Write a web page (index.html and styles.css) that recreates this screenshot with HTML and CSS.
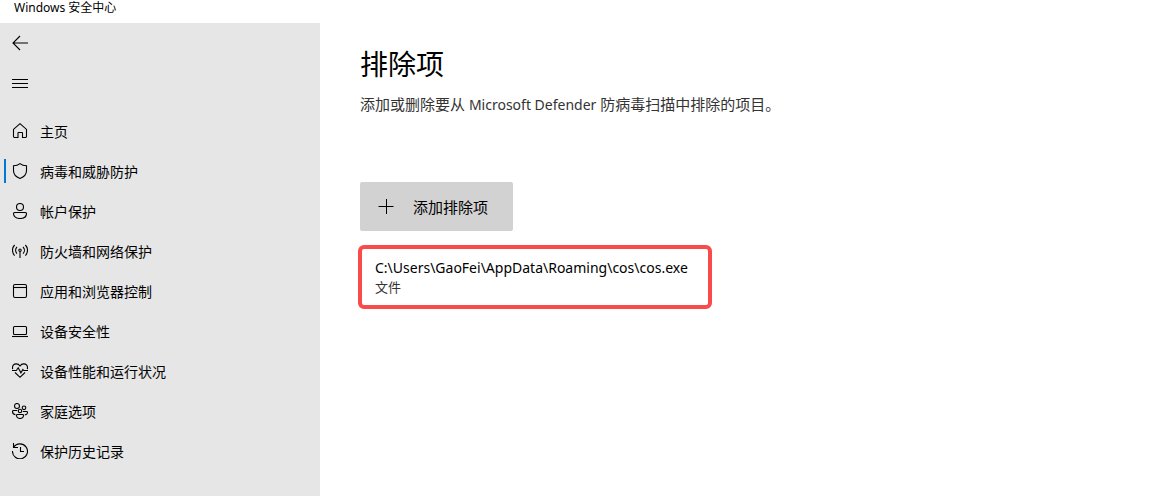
FILE: index.html
```html
<!DOCTYPE html>
<html lang="zh-CN">
<head>
<meta charset="utf-8">
<meta name="viewport" content="width=device-width, initial-scale=1">
<title>Windows 安全中心</title>
<link rel="stylesheet" href="styles.css">
</head>
<body>
<header class="titlebar">Windows 安全中心</header>
<div class="window">
  <aside class="sidebar">
    <button class="tool" type="button" aria-label="返回">
      <svg class="icon" viewBox="0 0 16 16"><path d="M8 1L1 8l7 7M1 8h15"/></svg>
    </button>
    <button class="tool" type="button" aria-label="菜单">
      <svg class="icon" viewBox="0 0 16 16"><path d="M0 4.500h16M0 8.500h16M0 12.500h16"/></svg>
    </button>
    <nav class="nav">
      <a class="item" href="#home">
        <svg class="icon" viewBox="0 0 16 16"><path d="M1.500 6.400L8 .7l6.500 5.700v7.200q0 .9-.9.900h-3.100V10q0-.5-.5-.5H6.500q-.5 0-.5.5v4.500H2.400q-.9 0-.9-.9z"/></svg>
        主页</a>
      <a class="item active" href="#virus" aria-current="page">
        <svg class="icon" viewBox="0 0 16 16"><path d="M8 .6C9.800 2 12 2.700 14.500 2.800v5c0 3.500-2.200 6-6.500 7.600-4.300-1.600-6.500-4.100-6.500-7.600v-5C4 2.700 6.200 2 8 .6z"/></svg>
        病毒和威胁防护</a>
      <a class="item" href="#account">
        <svg class="icon" viewBox="0 0 16 16"><circle cx="8" cy="4" r="3.500"/><path d="M2.500 9.500h11q1 0 1 1c0 3-2.500 5-6.500 5s-6.500-2-6.500-5q0-1 1-1z"/></svg>
        帐户保护</a>
      <a class="item" href="#firewall">
        <svg class="icon" viewBox="0 0 16 16"><path d="M2.600 2C-.2 5-.2 9.600 2.600 12.600M13.400 2c2.800 3 2.800 7.600 0 10.600M5 4c-1.900 1.900-1.900 4.700 0 6.600M11 4c1.900 1.900 1.900 4.700 0 6.600M8 8.500v6.500"/><circle cx="8" cy="7.200" r="1.200"/></svg>
        防火墙和网络保护</a>
      <a class="item" href="#apps">
        <svg class="icon" viewBox="0 0 16 16"><rect x="1.500" y="1.500" width="13" height="13" rx="1.500"/><path d="M1.500 4.500h13"/></svg>
        应用和浏览器控制</a>
      <a class="item" href="#device">
        <svg class="icon" viewBox="0 0 16 16"><rect x="1.500" y="3.500" width="13" height="8" rx="1"/><path d="M0 13.500h16"/></svg>
        设备安全性</a>
      <a class="item" href="#health">
        <svg class="icon" viewBox="0 0 16 16"><path d="M.7 6.200C-.2 2.500 2 .9 4.300.9 6 .9 7.200 1.700 8 3 8.800 1.700 10 .9 11.700.9c2.300 0 4.500 1.600 3.600 5.300M0 7.500h4.300l1.900-2.700 2.700 5 2-3.300.8 1H16M3 9.500l5 4.800 5-4.800"/></svg>
        设备性能和运行状况</a>
      <a class="item" href="#family">
        <svg class="icon" viewBox="0 0 16 16"><circle cx="5" cy="3" r="2.500"/><circle cx="12" cy="4.800" r="1.800"/><circle cx="8" cy="8" r="1.700"/><path d="M5.300 7.500H1.500q-1 0-1 1C.5 10.300 1.600 11.500 3.500 11.700M10.800 8.500h3.700q1 0 1 .9c0 1.500-1 2.400-2.700 2.500M5.500 11.500h5q1 0 1 .8c0 2-1.300 3.200-3.500 3.200s-3.500-1.200-3.500-3.200q0-.8 1-.8z"/></svg>
        家庭选项</a>
      <a class="item" href="#history">
        <svg class="icon" viewBox="0 0 16 16"><path d="M1.500 0v4.500H6M1.700 4.300A7.500 7.500 0 1 1 .5 8M8.500 4v4.500H12"/></svg>
        保护历史记录</a>
    </nav>
  </aside>
  <main class="content">
    <h1 class="heading">排除项</h1>
    <p class="description">添加或删除要从 <span class="product">Microsoft Defender</span> 防病毒扫描中排除的项目。</p>
    <button class="add" type="button">
      <svg class="icon plus" viewBox="0 0 16 16"><path d="M.5 7.500h15M8.500 0v15"/></svg>
      添加排除项
    </button>
    <section class="exclusion">
      <div class="path">C:\Users\GaoFei\AppData\Roaming\cos\cos.exe</div>
      <div class="kind">文件</div>
    </section>
  </main>
</div>
</body>
</html>
```
FILE: styles.css
```css
* {
  box-sizing: border-box;
}

body {
  display: flex;
  flex-direction: column;
  min-height: 100vh;
  margin: 0;
  background: #fff;
  color: #000;
  font-family: "Noto Sans", "Noto Sans CJK SC", sans-serif;
  font-size: 14px;
}

button {
  border: 0;
  color: inherit;
  font: inherit;
}

.titlebar {
  height: 23px;
  padding-left: 14px;
  font-size: 12px;
  line-height: 16px;
}

.window {
  display: flex;
  flex: 1;
}

.sidebar {
  flex: 0 0 320px;
  background: #e6e6e6;
}

.icon {
  flex: none;
  width: 16px;
  height: 16px;
  fill: none;
  stroke: currentColor;
  stroke-width: 1.1;
}

.plus {
  stroke-width: 1;
}

.tool {
  display: flex;
  align-items: center;
  height: 40px;
  padding: 0 12px;
  background: transparent;
}

.nav {
  padding-top: 8px;
}

.item {
  position: relative;
  display: flex;
  align-items: center;
  gap: 12px;
  height: 40px;
  padding-left: 12px;
  color: inherit;
  text-decoration: none;
}

.active::before {
  content: "";
  position: absolute;
  top: 8px;
  left: 4px;
  width: 2px;
  height: 24px;
  background: #0078d4;
}

.content {
  flex: 1;
  padding: 19px 40px;
}

.heading {
  margin: 0;
  font-size: 28px;
  font-weight: 400;
  line-height: 44px;
}

.description {
  margin: 6px 0 0;
  color: #333;
  font-size: 15px;
  line-height: 24px;
}

.product {
  font-size: 14px;
}

.add {
  display: flex;
  align-items: center;
  gap: 19px;
  height: 49px;
  margin-top: 65px;
  padding: 0 25px 0 18px;
  border-radius: 2px;
  background: #d2d2d2;
  font-size: 15px;
}

.exclusion {
  width: fit-content;
  margin: 14px 0 0 -2px;
  padding: 9px 20px 9px 13px;
  border: 4px solid #f94b49;
  border-radius: 6px;
}

.path {
  font-size: 14px;
  line-height: 20px;
}

.kind {
  color: #333;
  font-size: 13px;
  line-height: 18px;
}
```
